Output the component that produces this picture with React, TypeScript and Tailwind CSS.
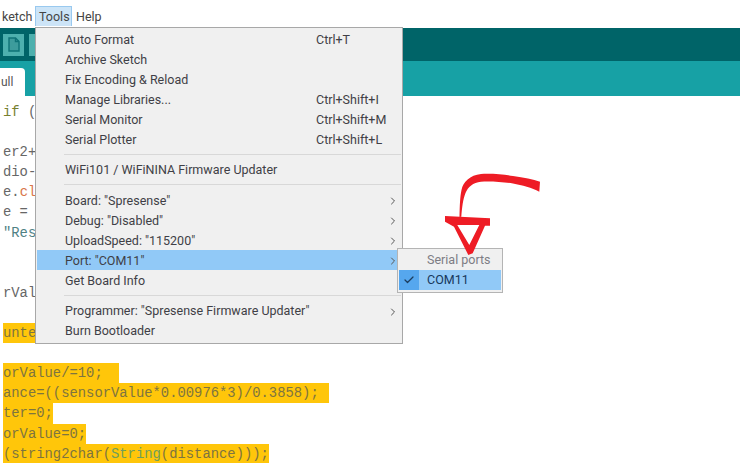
import { Check, ChevronRight } from 'lucide-react';

const menuFont = { fontFamily: 'Roboto, sans-serif' };

type MenuRow = { label?: string; shortcut?: string; arrow?: boolean; active?: boolean };

const menuRows: MenuRow[] = [
  { label: 'Auto Format', shortcut: 'Ctrl+T' },
  { label: 'Archive Sketch' },
  { label: 'Fix Encoding & Reload' },
  { label: 'Manage Libraries...', shortcut: 'Ctrl+Shift+I' },
  { label: 'Serial Monitor', shortcut: 'Ctrl+Shift+M' },
  { label: 'Serial Plotter', shortcut: 'Ctrl+Shift+L' },
  {},
  { label: 'WiFi101 / WiFiNINA Firmware Updater' },
  {},
  { label: 'Board: "Spresense"', arrow: true },
  { label: 'Debug: "Disabled"', arrow: true },
  { label: 'UploadSpeed: "115200"', arrow: true },
  { label: 'Port: "COM11"', arrow: true, active: true },
  { label: 'Get Board Info' },
  {},
  { label: 'Programmer: "Spresense Firmware Updater"', arrow: true },
  { label: 'Burn Bootloader' },
];

function CodeLine({ children }: { children?: React.ReactNode }) {
  return <div className="h-[20.1px] leading-[20.1px] whitespace-pre">{children || ' '}</div>;
}

function Marked({ children }: { children: React.ReactNode }) {
  return <span className="bg-[#ffc60a] text-[#7d7440] inline-block h-[20.1px]">{children}</span>;
}

export default function App() {
  return (
    <div className="relative w-[740px] h-[463px] overflow-hidden bg-white">
      <div className="h-[28px] flex items-center pl-[2px] pt-[6px] text-[12.5px] text-[#444]" style={menuFont}>
        <span className="w-[33px]">ketch</span>
        <span className="w-[37px] h-[20px] pl-[3px] leading-[20px] bg-[#cce4f7] border border-[#99c9ef] border-b-0 -mt-[2px]">Tools</span>
        <span className="ml-[4px]">Help</span>
      </div>

      <div className="h-[33px] bg-[#006468] flex items-center pl-[3px] gap-[5px]">
        <div className="w-[21px] h-[22px] bg-[#4db0ae] flex items-center justify-center">
          <svg width="12" height="15" viewBox="0 0 12 15" fill="#3d9c9c" stroke="#0f7377" strokeWidth="1.4">
            <path d="M1 1h6.5L11 4.5V14H1z" />
            <path d="M7.5 1v3.5H11" fill="none" />
          </svg>
        </div>
        <div className="w-[21px] h-[22px] bg-[#4db0ae]" />
      </div>

      <div className="h-[35px] bg-[#17a1a5] pt-[7px]">
        <div className="w-[25px] h-[28px] bg-white rounded-tr-[4px] pl-[1px] pt-[5px] text-[12px] text-[#555]" style={menuFont}>ull</div>
      </div>

      <div className="pt-[6px] pl-[3px] font-['Liberation_Mono',monospace] text-[13.85px] text-[#666]">
        <CodeLine><span className="text-[#77802f]">if</span> (</CodeLine>
        <CodeLine />
        <CodeLine>er2+</CodeLine>
        <CodeLine>dio-</CodeLine>
        <CodeLine>e.<span className="text-[#d9764a]">cl</span></CodeLine>
        <CodeLine>e =</CodeLine>
        <CodeLine><span className="text-[#4f8184]">"Res</span></CodeLine>
        <CodeLine />
        <CodeLine />
        <CodeLine>rVal</CodeLine>
        <CodeLine />
        <CodeLine><Marked>unte</Marked></CodeLine>
        <CodeLine />
        <CodeLine><Marked>orValue/=10;  </Marked></CodeLine>
        <CodeLine><Marked><span className="pr-[2px]">ance=((sensorValue*0.00976*3)/0.3858); </span></Marked></CodeLine>
        <CodeLine><Marked>ter=0;</Marked></CodeLine>
        <CodeLine><Marked>orValue=0;</Marked></CodeLine>
        <CodeLine><Marked>(string2char(<span className="text-[#6f9e5c]">String</span>(distance)));</Marked></CodeLine>
      </div>

      <div
        className="absolute left-[35px] top-[27px] w-[368px] h-[317px] bg-[#f0f0f0] border border-[#a8a8a8] pt-[1px] px-[1px] text-[12.5px] text-[#3f3f46]"
        style={menuFont}
      >
        {menuRows.map((row, i) =>
          row.label ? (
            <div
              key={i}
              className={`h-[20.1px] flex items-center pl-[28px] pt-[2px] relative ${row.active ? 'bg-[#91c9f7]' : ''}`}
            >
              <span className="w-[251px] whitespace-nowrap">{row.label}</span>
              {row.shortcut && <span className="whitespace-nowrap">{row.shortcut}</span>}
              {row.arrow && <ChevronRight size={12} strokeWidth={2} className="absolute right-[2px] text-[#555]" />}
            </div>
          ) : (
            <div key={i} className="h-[10.2px] flex items-center pl-[27px]">
              <div className="h-px w-full bg-[#d8d8d8]" />
            </div>
          ),
        )}
      </div>

      <div
        className="absolute left-[397px] top-[248px] w-[106px] h-[45px] bg-[#f0f0f0] border border-[#b4b4b4] p-[1px] text-[12.5px] text-[#3f3f46]"
        style={menuFont}
      >
        <div className="h-[20px] pl-[28px] leading-[20px] text-[#7d7d84]">Serial ports</div>
        <div className="h-[20px] flex items-center bg-[#91c9f7] text-[#17385c]">
          <div className="w-[20px] h-full bg-[#56a7ee] flex items-center justify-center">
            <Check size={12} strokeWidth={2.5} className="text-[#1c3d5e]" />
          </div>
          <span className="pl-[8px] pt-[1px]">COM11</span>
        </div>
      </div>

      <svg className="absolute left-[440px] top-[170px]" width="105" height="90" viewBox="440 170 105 90" fill="#ee1c25">
        <path d="M459.5 217C459.8 205 460 197 461.5 190C463 182 470 175 481 174C492 173.5 505 174.5 513 176C524 177.5 533 179 540 181.7L539.3 191.7C532 188 522 185 513 183.5C503 182 490 181 481 181.7C473 182.5 468 187 465.5 193C463 199 462 208 461.3 216.7Z" />
        <path
          fillRule="evenodd"
          d="M445 216L490 218.3V225.7H485L472.7 253.3L468.3 255L454 226.7L445 221.7ZM457.3 225H479.3L469.3 245Z"
        />
      </svg>
    </div>
  );
}
